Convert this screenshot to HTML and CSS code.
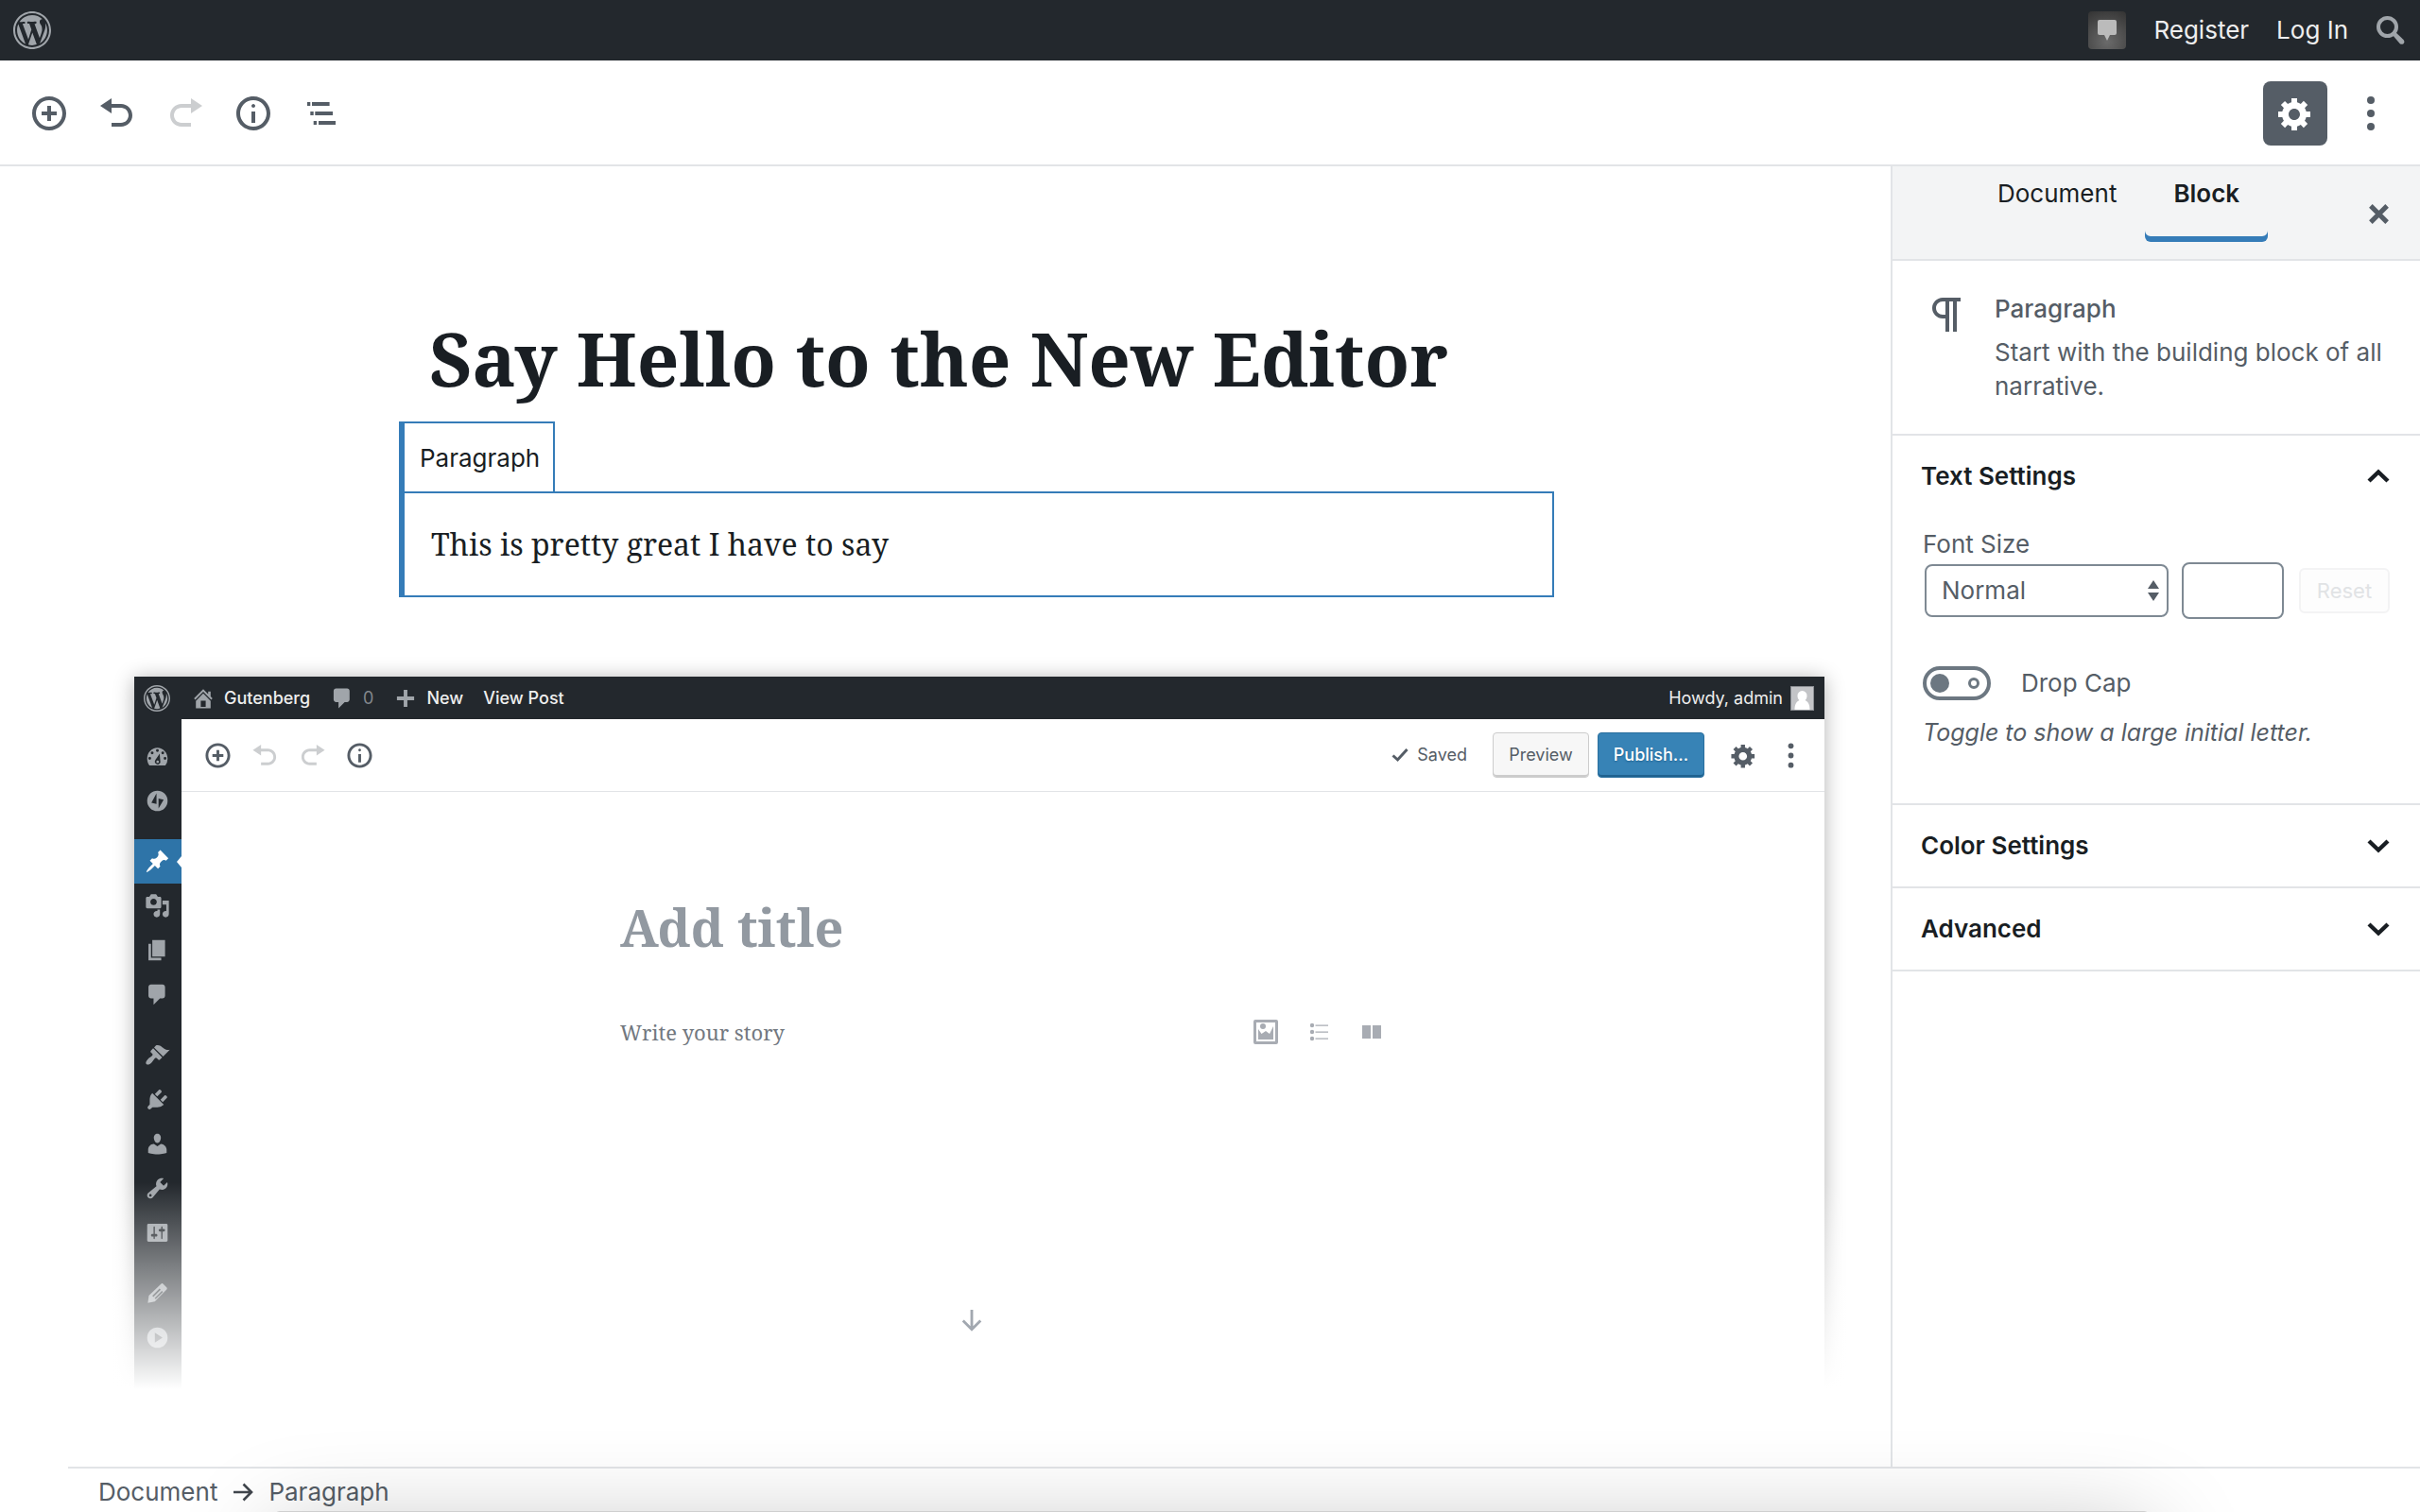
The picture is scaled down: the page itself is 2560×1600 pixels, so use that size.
FILE: index.html
```html
<!DOCTYPE html>
<html lang="en">
<head>
<meta charset="utf-8">
<meta name="viewport" content="width=device-width, initial-scale=1">
<title>Say Hello to the New Editor</title>
<link rel="stylesheet" href="styles.css">
</head>
<body>
<svg class="sprite" aria-hidden="true">
  <symbol id="i-wordpress" viewBox="0 0 20 20"><path d="M20 10c0-5.52-4.48-10-10-10S0 4.48 0 10s4.48 10 10 10 10-4.48 10-10zM10 1.01c4.97 0 8.99 4.02 8.99 8.99s-4.02 8.99-8.99 8.99S1.01 14.97 1.01 10 5.03 1.01 10 1.01zM8.01 14.82L4.96 6.61c.49-.03 1.05-.08 1.05-.08.43-.05.38-1.01-.06-.99 0 0-1.29.1-2.13.1-.15 0-.33 0-.52-.01 1.44-2.17 3.9-3.6 6.7-3.6 2.09 0 3.99.79 5.41 2.09-.6-.08-1.45.35-1.45 1.42 0 .66.38 1.22.79 1.88.31.54.5 1.22.5 2.21 0 1.34-1.27 4.48-1.27 4.48l-2.71-7.5c.48-.03.75-.16.75-.16.43-.05.38-1.1-.05-1.08 0 0-1.3.11-2.14.11-.78 0-2.11-.11-2.11-.11-.43-.02-.48 1.06-.05 1.08l.84.08 1.12 3.04zm6.02 2.15L16.64 10s.67-1.69.39-3.81c.63 1.14.94 2.42.94 3.81 0 2.96-1.56 5.58-3.94 6.97zM2.68 6.77L6.5 17.25c-2.67-1.3-4.47-4.08-4.47-7.25 0-1.16.2-2.23.65-3.23zm7.45 4.53l2.29 6.25c-.75.27-1.57.42-2.42.42-.72 0-1.41-.11-2.06-.3z"/></symbol>
  <symbol id="i-insert" viewBox="0 0 20 20"><path d="M10 1c-5 0-9 4-9 9s4 9 9 9 9-4 9-9-4-9-9-9zm0 16c-3.9 0-7-3.1-7-7s3.1-7 7-7 7 3.1 7 7-3.1 7-7 7zm1-11H9v3H6v2h3v3h2v-3h3V9h-3V6z"/></symbol>
  <symbol id="i-undo" viewBox="0 0 20 20"><path d="M12 5H7V2L1 6l6 4V7h5c2.2 0 4 1.8 4 4s-1.8 4-4 4H7v2h5c3.3 0 6-2.7 6-6s-2.7-6-6-6z"/></symbol>
  <symbol id="i-redo" viewBox="0 0 20 20"><path d="M8 5h5V2l6 4-6 4V7H8c-2.2 0-4 1.8-4 4s1.8 4 4 4h5v2H8c-3.3 0-6-2.7-6-6s2.7-6 6-6z"/></symbol>
  <symbol id="i-info" viewBox="0 0 20 20"><path d="M9 15h2V9H9v6zm1-10c-.5 0-1 .5-1 1s.5 1 1 1 1-.5 1-1-.5-1-1-1zm0-4c-5 0-9 4-9 9s4 9 9 9 9-4 9-9-4-9-9-9zm0 16c-3.9 0-7-3.1-7-7s3.1-7 7-7 7 3.1 7 7-3.1 7-7 7z"/></symbol>
  <symbol id="i-outline" viewBox="0 0 40 40"><path d="M5 8h3.300v4H5zM10 8h18.600v4H10zM8.300 18h3.400v4H8.300zM13.300 18H32v4H13.300zM11.700 28H15v4h-3.300zM17 28h18v4H17z"/></symbol>
  <symbol id="i-gear" viewBox="0 0 20 20"><path d="M18 12h-2.180c-.17.7-.44 1.350-.81 1.930l1.540 1.540-2.100 2.100-1.540-1.540c-.58.36-1.230.63-1.910.79V19H8v-2.180c-.68-.16-1.330-.43-1.910-.79l-1.540 1.540-2.120-2.120 1.540-1.540c-.36-.58-.63-1.230-.79-1.910H1V9.030h2.170c.16-.7.44-1.350.8-1.940L2.430 5.550l2.100-2.100 1.540 1.540c.58-.37 1.240-.64 1.930-.81V2h3v2.180c.68.16 1.330.43 1.910.79l1.540-1.540 2.120 2.120-1.540 1.540c.36.59.64 1.240.8 1.940H18V12zm-8.500 1.500c1.660 0 3-1.340 3-3s-1.340-3-3-3-3 1.340-3 3 1.340 3 3 3z"/></symbol>
  <symbol id="i-more" viewBox="0 0 20 20"><circle cx="10" cy="3" r="2"/><circle cx="10" cy="10" r="2"/><circle cx="10" cy="17" r="2"/></symbol>
  <symbol id="i-search" viewBox="0 0 32 32"><circle cx="12.500" cy="12.500" r="9.500" fill="none" stroke="currentColor" stroke-width="4"/><path d="M17.500 20.500l3-3 9 8.500c2.500 3-1 6.500-4 4z"/></symbol>
  <symbol id="i-bubble" viewBox="0 0 20 22"><path d="M2 0h16a2 2 0 0 1 2 2v12a2 2 0 0 1-2 2h-5l-3 6-3-6H2a2 2 0 0 1-2-2V2a2 2 0 0 1 2-2z"/></symbol>
  <symbol id="i-comment" viewBox="0 0 20 20"><path d="M5 2h9c1.100 0 2 .9 2 2v7c0 1.100-.9 2-2 2h-2l-5 5v-5H5c-1.100 0-2-.9-2-2V4c0-1.100.9-2 2-2z"/></symbol>
  <symbol id="i-home" viewBox="0 0 20 20"><path fill-rule="evenodd" d="M16 8.500l1.530 1.530-1.060 1.060L10 4.600l-6.470 6.490-1.060-1.060L10 2.500l4 4v-2h2v4zm-6-2.460l6 5.990V18H4v-5.970zM12 17v-5H8v5h4z"/></symbol>
  <symbol id="i-plus" viewBox="0 0 20 20"><path d="M17 8.500v3h-5.500V17h-3v-5.500H3v-3h5.500V3h3v5.500z"/></symbol>
  <symbol id="i-dashboard" viewBox="0 0 20 20"><path fill-rule="evenodd" d="M3.760 17h12.480A8.700 8.700 0 0 0 18 11.780c0-4.760-3.580-8.610-8-8.610s-8 3.850-8 8.610c0 1.960.65 3.770 1.760 5.220zM10 4.200a1.100 1.100 0 1 1 0 2.200 1.100 1.100 0 0 1 0-2.200zM5.900 6.200a1.100 1.100 0 1 1 0 2.200 1.100 1.100 0 0 1 0-2.200zM14.200 6.200a1.100 1.100 0 1 1 0 2.200 1.100 1.100 0 0 1 0-2.200zM4 10.400a1.100 1.100 0 1 1 0 2.200 1.100 1.100 0 0 1 0-2.200zM16 10.400a1.100 1.100 0 1 1 0 2.200 1.100 1.100 0 0 1 0-2.200zM11.800 7.800l.4 5.400a2.200 2.200 0 1 1-3.700-.6zM10.200 13.200a1 1 0 1 0 0 2 1 1 0 0 0 0-2z"/></symbol>
  <symbol id="i-bolt" viewBox="0 0 20 20"><path fill-rule="evenodd" d="M10 2a8 8 0 1 1 0 16 8 8 0 0 1 0-16zM9.300 4L5.300 11.500l4 .9zM10.900 8.200V16L14.900 9z"/></symbol>
  <symbol id="i-pin" viewBox="0 0 20 20"><path d="M10.440 3.020l1.820-1.820 6.360 6.350-1.830 1.820c-1.050-.68-2.480-.57-3.410.36l-.75.75c-.92.93-1.040 2.350-.35 3.410l-1.830 1.820-2.410-2.410-2.800 2.790c-.42.42-3.380 2.710-3.800 2.290s1.860-3.390 2.280-3.810l2.790-2.790L4.100 9.360l1.830-1.820c1.050.69 2.480.57 3.400-.36l.75-.75c.93-.92 1.050-2.350.36-3.410z"/></symbol>
  <symbol id="i-media" viewBox="0 0 20 20"><path fill-rule="evenodd" d="M13 11V4c0-.55-.45-1-1-1h-1.670L9 1H5L3.670 3H2c-.55 0-1 .45-1 1v7c0 .55.45 1 1 1h10c.55 0 1-.45 1-1zM7 4.500c1.380 0 2.500 1.120 2.500 2.500S8.380 9.500 7 9.500 4.500 8.380 4.500 7 5.620 4.500 7 4.500zM14 6h5v10.500c0 1.380-1.120 2.500-2.500 2.500S14 17.880 14 16.500s1.120-2.500 2.500-2.500c.17 0 .34.02.5.05V9h-3V6zm-4 8.050V13h2v3.500c0 1.380-1.120 2.500-2.500 2.500S7 17.880 7 16.500 8.120 14 9.500 14c.17 0 .34.02.5.05z"/></symbol>
  <symbol id="i-pages" viewBox="0 0 20 20"><path d="M6 15V2h10v13H6zm-1 1h8v2H3V5h2v11z"/></symbol>
  <symbol id="i-brush" viewBox="0 0 20 20"><path d="M14.480 11.060L7.410 3.990l1.500-1.500c.5-.56 2.300-.47 3.510.32 1.210.8 1.430 1.280 2.910 2.100 1.180.64 2.450 1.260 4.450.85zm-.71.71L6.700 4.700 4.930 6.470c-.39.39-.39 1.020 0 1.410l1.060 1.060c.39.39.39 1.030 0 1.420-.6.6-1.430 1.110-2.210 1.690-.35.26-.7.53-1.010.84C1.430 14.230.4 16.080 1.400 17.070c.99 1 2.840-.03 4.180-1.360.31-.31.58-.66.85-1.020.57-.78 1.080-1.610 1.690-2.210.39-.39 1.020-.39 1.410 0l1.060 1.060c.39.39 1.020.39 1.410 0z"/></symbol>
  <symbol id="i-plug" viewBox="0 0 20 20"><path d="M13.110 4.360L9.870 7.600 8 5.730l3.240-3.240c.35-.34 1.050-.2 1.560.32.52.51.66 1.210.31 1.550zm-8 1.770l.91-1.120 9.010 9.010-1.190.84c-.71.71-2.630 1.160-3.820 1.160H6.140L4.900 17.260c-.59.59-1.540.59-2.120 0-.59-.58-.59-1.530 0-2.120l1.240-1.240v-3.880c0-1.130.4-3.190 1.090-3.890zm7.260 3.970l3.240-3.240c.34-.35 1.040-.21 1.550.31.52.51.66 1.210.31 1.550l-3.240 3.250z"/></symbol>
  <symbol id="i-user" viewBox="0 0 20 20"><path d="M10 9.250c-2.270 0-2.730-3.440-2.730-3.440C7 4.020 7.820 2 9.970 2c2.160 0 2.980 2.020 2.710 3.810 0 0-.41 3.440-2.680 3.440zm0 2.570L12.720 10c2.390 0 4.520 2.330 4.520 4.530v2.490s-3.650 1.130-7.240 1.130c-3.650 0-7.240-1.130-7.240-1.130v-2.490c0-2.250 1.940-4.480 4.470-4.480z"/></symbol>
  <symbol id="i-wrench" viewBox="0 0 20 20"><path fill-rule="evenodd" d="M16.680 9.770c-1.340 1.340-3.300 1.670-4.950.99l-5.410 6.520c-.99.99-2.590.99-3.580 0s-.99-2.590 0-3.570l6.520-5.420c-.68-1.650-.35-3.610.99-4.950 1.280-1.280 3.120-1.620 4.720-1.060l-2.890 2.890 2.820 2.820 2.860-2.870c.53 1.580.18 3.390-1.080 4.650zM3.810 16.210c.4.39 1.040.39 1.430 0 .4-.4.4-1.040 0-1.430-.39-.4-1.030-.4-1.430 0-.39.39-.39 1.030 0 1.430z"/></symbol>
  <symbol id="i-sliders" viewBox="0 0 20 20"><path fill-rule="evenodd" d="M18 16V4c0-.55-.45-1-1-1H3c-.55 0-1 .45-1 1v12c0 .55.45 1 1 1h14c.55 0 1-.45 1-1zM8 11h1c.55 0 1 .45 1 1s-.45 1-1 1H8v1.500c0 .28-.22.5-.5.5s-.5-.22-.5-.5V13H6c-.55 0-1-.45-1-1s.45-1 1-1h1V5.500c0-.28.22-.5.5-.5s.5.22.5.5V11zm5-2h-1c-.55 0-1-.45-1-1s.45-1 1-1h1V5.500c0-.28.22-.5.5-.5s.5.22.5.5V7h1c.55 0 1 .45 1 1s-.45 1-1 1h-1v5.500c0 .28-.22.5-.5.5s-.5-.22-.5-.5V9z"/></symbol>
  <symbol id="i-pencil" viewBox="0 0 20 20"><path fill-rule="evenodd" d="M13 2.500q.8-.6 1.600.2l2.600 2.600q.8.800.1 1.700L8 16.500l-5.500 1 .8-5.700zM11.700 6.300L6 12l.9.900 5.700-5.700zM13.500 8.100l-5.700 5.700.9.900 5.700-5.700z"/></symbol>
  <symbol id="i-play" viewBox="0 0 20 20"><path fill-rule="evenodd" d="M10 2a8 8 0 1 1 0 16 8 8 0 0 1 0-16zM8 6.200v7.600l6-3.800z"/></symbol>
  <symbol id="i-paragraph" viewBox="0 0 24 24"><path fill-rule="evenodd" d="M11 5v7H9.500C7.600 12 6 10.400 6 8.500S7.600 5 9.500 5H11zM19 3H9.500C6.500 3 4 5.500 4 8.500S6.500 14 9.500 14H11v7h2V5h2v16h2V5h2z"/></symbol>
  <symbol id="i-close" viewBox="0 0 20 20"><path d="M2.500 2.500l15 15M17.500 2.500l-15 15" fill="none" stroke="currentColor" stroke-width="4.400"/></symbol>
  <symbol id="i-chevron" viewBox="0 0 24 16"><path d="M2 3l10 9.500L22 3" fill="none" stroke="currentColor" stroke-width="4.400"/></symbol>
  <symbol id="i-check" viewBox="0 0 18 16"><path d="M1.500 8.500l5 4.500L16.500 2" fill="none" stroke="currentColor" stroke-width="3"/></symbol>
  <symbol id="i-arrow" viewBox="0 0 22 22"><path d="M1 11h19M11.500 2.500l8.500 8.500-8.500 8.500" fill="none" stroke="currentColor" stroke-width="2.600"/></symbol>
  <symbol id="i-image" viewBox="0 0 26 26"><path fill-rule="evenodd" d="M2 0h22a2 2 0 0 1 2 2v22a2 2 0 0 1-2 2H2a2 2 0 0 1-2-2V2a2 2 0 0 1 2-2zM3 3v20h20V3z"/><circle cx="10" cy="7" r="3"/><path d="M5 10l3.500 5L13 12l4 3 4-8v14H5z"/></symbol>
  <symbol id="i-list" viewBox="-3 -3 26 26"><circle cx="3" cy="3" r="2.200"/><circle cx="3" cy="10" r="2.200"/><circle cx="3" cy="17" r="2.200"/><path d="M6.500 2.500H20v1.200H6.500zM6.500 9.500H20v1.200H6.500zM6.500 16.500H20v1.200H6.500z"/></symbol>
  <symbol id="i-columns" viewBox="-3 -3 26 26"><path d="M0 3h9v14H0zM11 3h9v14h-9z"/></symbol>
  <symbol id="i-updown" viewBox="0 0 12 22"><path d="M6 0l6 9H0zM6 22l6-9H0z"/></symbol>
</svg>

<nav class="adminbar" aria-label="Toolbar">
  <a class="adminbar-logo" href="#" aria-label="About WordPress"><svg class="icon"><use href="#i-wordpress"/></svg></a>
  <div class="adminbar-right">
    <a class="adminbar-avatar" href="#" aria-label="Comments"><svg><use href="#i-bubble"/></svg></a>
    <a href="#">Register</a>
    <a href="#">Log In</a>
    <a class="adminbar-search" href="#" aria-label="Search"><svg><use href="#i-search"/></svg></a>
  </div>
</nav>

<header class="toolbar">
  <div class="toolbar-group">
    <button type="button" aria-label="Add block"><svg class="icon"><use href="#i-insert"/></svg></button>
    <button type="button" aria-label="Undo"><svg class="icon"><use href="#i-undo"/></svg></button>
    <button type="button" aria-label="Redo" disabled><svg class="icon"><use href="#i-redo"/></svg></button>
    <button type="button" aria-label="Content structure"><svg class="icon"><use href="#i-info"/></svg></button>
    <button type="button" aria-label="Block navigation"><svg class="icon"><use href="#i-outline"/></svg></button>
  </div>
  <div class="toolbar-group toolbar-end">
    <button class="is-toggled" type="button" aria-label="Settings" aria-pressed="true"><svg class="icon"><use href="#i-gear"/></svg></button>
    <button type="button" aria-label="More tools and options"><svg class="icon"><use href="#i-more"/></svg></button>
  </div>
</header>

<div class="workspace">
  <main class="editor">
    <div class="column">
      <h1 class="post-title">Say Hello to the New Editor</h1>
      <section class="block">
        <span class="block-label">Paragraph</span>
        <p class="block-text">This is pretty great I have to say</p>
      </section>
    </div>

    <figure class="shot">
      <div class="shot-bar">
        <svg class="shot-wp"><use href="#i-wordpress"/></svg>
        <span class="shot-item"><svg><use href="#i-home"/></svg>Gutenberg</span>
        <span class="shot-item shot-count"><svg><use href="#i-comment"/></svg>0</span>
        <span class="shot-item"><svg><use href="#i-plus"/></svg>New</span>
        <span class="shot-item">View Post</span>
        <span class="shot-user">Howdy, admin
          <svg class="shot-avatar" viewBox="0 0 25 26"><rect width="25" height="26" fill="#8c8f94"/><rect x="1" y="1" width="23" height="24" fill="#c3c4c7"/><path d="M12.500 5a5 5 0 0 1 5 5.500c0 2-.9 3.500-2 4.500 3.500 1.500 5 5 5 10h-16c0-5 1.500-8.500 5-10-1.100-1-2-2.500-2-4.500A5 5 0 0 1 12.500 5z" fill="#fff"/></svg>
        </span>
      </div>
      <div class="shot-body">
        <ul class="shot-menu">
          <li><svg><use href="#i-dashboard"/></svg></li>
          <li><svg><use href="#i-bolt"/></svg></li>
          <li class="group current"><svg><use href="#i-pin"/></svg></li>
          <li><svg><use href="#i-media"/></svg></li>
          <li><svg><use href="#i-pages"/></svg></li>
          <li><svg><use href="#i-comment"/></svg></li>
          <li class="group"><svg><use href="#i-brush"/></svg></li>
          <li><svg><use href="#i-plug"/></svg></li>
          <li><svg><use href="#i-user"/></svg></li>
          <li><svg><use href="#i-wrench"/></svg></li>
          <li><svg><use href="#i-sliders"/></svg></li>
          <li class="group"><svg><use href="#i-pencil"/></svg></li>
          <li><svg><use href="#i-play"/></svg></li>
        </ul>
        <div class="shot-main">
          <div class="shot-toolbar">
            <button type="button" aria-label="Add block"><svg><use href="#i-insert"/></svg></button>
            <button type="button" aria-label="Undo" disabled><svg><use href="#i-undo"/></svg></button>
            <button type="button" aria-label="Redo" disabled><svg><use href="#i-redo"/></svg></button>
            <button type="button" aria-label="Content structure"><svg><use href="#i-info"/></svg></button>
            <span class="shot-saved"><svg><use href="#i-check"/></svg>Saved</span>
            <button class="push preview" type="button">Preview</button>
            <button class="push publish" type="button">Publish…</button>
            <button class="shot-gear" type="button" aria-label="Settings"><svg><use href="#i-gear"/></svg></button>
            <button type="button" aria-label="More"><svg><use href="#i-more"/></svg></button>
          </div>
          <div class="shot-canvas">
            <h2>Add title</h2>
            <div class="shot-story">
              <p>Write your story</p>
              <svg><use href="#i-image"/></svg>
              <svg><use href="#i-list"/></svg>
              <svg><use href="#i-columns"/></svg>
            </div>
            <svg class="shot-down"><use href="#i-arrow"/></svg>
          </div>
        </div>
      </div>
    </figure>
  </main>

  <aside class="sidebar">
    <div class="tabs">
      <button type="button">Document</button>
      <button class="active" type="button">Block</button>
      <button class="close" type="button" aria-label="Close settings"><svg><use href="#i-close"/></svg></button>
    </div>
    <section class="card">
      <svg><use href="#i-paragraph"/></svg>
      <div>
        <h2>Paragraph</h2>
        <p>Start with the building block of all narrative.</p>
      </div>
    </section>
    <section class="panel">
      <h2><button type="button" aria-expanded="true">Text Settings<svg class="up"><use href="#i-chevron"/></svg></button></h2>
      <div class="panel-body">
        <label class="field-label" for="font-size">Font Size</label>
        <div class="size-row">
          <div class="select">
            <select id="font-size"><option>Normal</option></select>
            <svg><use href="#i-updown"/></svg>
          </div>
          <input class="size-input" type="text" aria-label="Custom font size">
          <button class="reset" type="button" disabled>Reset</button>
        </div>
        <div class="toggle-row">
          <input class="toggle" id="drop-cap" type="checkbox" role="switch" aria-describedby="drop-cap-help">
          <label for="drop-cap">Drop Cap</label>
        </div>
        <p class="help" id="drop-cap-help">Toggle to show a large initial letter.</p>
      </div>
    </section>
    <section class="panel">
      <h2><button type="button" aria-expanded="false">Color Settings<svg><use href="#i-chevron"/></svg></button></h2>
    </section>
    <section class="panel">
      <h2><button type="button" aria-expanded="false">Advanced<svg><use href="#i-chevron"/></svg></button></h2>
    </section>
  </aside>
</div>

<footer class="breadcrumb">
  <button type="button">Document</button>
  <svg><use href="#i-arrow"/></svg>
  <button type="button">Paragraph</button>
</footer>
<div class="window-shadow"></div>
</body>
</html>
```

FILE: styles.css
```css
:root {
  --ink: #191e23;
  --slate: #555d66;
  --bar: #23282d;
  --line: #e2e4e7;
  --blue: #357cb8;
  --mute: #a0a5aa;
}

*, *::before, *::after { box-sizing: border-box; }

body {
  margin: 0;
  min-height: 100vh;
  display: flex;
  flex-direction: column;
  overflow: hidden;
  background: #fff;
  color: var(--slate);
  font: 26px/36px Inter, "Liberation Sans", sans-serif;
}

h1, h2, p, ul, figure { margin: 0; padding: 0; }
button, input, select { font: inherit; color: inherit; margin: 0; }
button { padding: 0; border: 0; background: none; }
svg { fill: currentColor; flex: none; display: block; }
.sprite { position: absolute; width: 0; height: 0; }
.icon { width: 40px; height: 40px; }

/* Admin bar */
.adminbar {
  height: 64px;
  padding: 0 15px 0 14px;
  display: flex;
  align-items: center;
  justify-content: space-between;
  background: var(--bar);
  color: #eee;
}
.adminbar a { color: inherit; text-decoration: none; }
.adminbar .adminbar-logo, .adminbar .adminbar-search { color: var(--mute); }
.adminbar-right { display: flex; align-items: center; gap: 29px; }
.adminbar-search svg { width: 32px; height: 32px; }
.adminbar-avatar {
  width: 40px;
  height: 40px;
  display: grid;
  place-items: center;
  border-radius: 4px;
  background: radial-gradient(circle at 50% 80%, #6b6b6b, #333);
}
.adminbar .adminbar-avatar { color: #bbb; }
.adminbar-avatar svg { width: 20px; height: 22px; }

/* Editor toolbar */
.toolbar {
  height: 112px;
  padding: 2px 16px 0;
  display: flex;
  align-items: center;
  justify-content: space-between;
  border-bottom: 2px solid var(--line);
}
.toolbar-group { display: flex; align-items: center; }
.toolbar-end { gap: 10px; }
.toolbar button {
  width: 72px;
  height: 72px;
  display: grid;
  place-items: center;
}
.toolbar button:disabled { color: #ccced0; }
.toolbar .is-toggled {
  width: 68px;
  height: 68px;
  border-radius: 8px;
  background: var(--slate);
  color: #fff;
}

/* Writing area */
.workspace { flex: 1; display: flex; }
.editor { flex: 1; min-width: 0; padding: 152px 0 80px 72px; }
.column { max-width: 1216px; margin: 0 auto; }
.post-title {
  padding-left: 26px;
  margin-bottom: 16px;
  color: var(--ink);
  font: bold 78px/102px "Noto Serif", "DejaVu Serif", serif;
}
.block {
  margin-left: -6px;
  border-left: 6px solid var(--blue);
  color: var(--ink);
}
.block-label {
  display: block;
  width: fit-content;
  height: 74px;
  padding: 0 14px 0 16px;
  border: solid var(--blue);
  border-width: 2px 2px 0 0;
  line-height: 74px;
}
.block-text {
  padding: 32px 28px;
  border: 2px solid var(--blue);
  border-left: 0;
  font: 32px/44px "Noto Serif", "DejaVu Serif", serif;
}

/* Editor preview picture */
.shot {
  position: relative;
  height: 754px;
  margin: 84px 70px 0;
  display: flex;
  flex-direction: column;
  background: #fff;
  box-shadow: 0 2px 20px rgba(0, 0, 0, .3);
  font-size: 18px;
  line-height: 24px;
}
.shot::after {
  content: "";
  position: absolute;
  inset: 535px -30px -30px;
  background: linear-gradient(rgba(255, 255, 255, 0), #fff 219px);
}
.shot-bar {
  height: 45px;
  padding: 0 11px 0 10px;
  display: flex;
  align-items: center;
  background: var(--bar);
  color: #eee;
  font-weight: 500;
}
.shot-bar svg { color: var(--mute); }
.shot-wp { width: 28px; height: 28px; margin-right: 22px; }
.shot-item { display: flex; align-items: center; gap: 9px; margin-right: 21px; }
.shot-item svg { width: 26px; height: 26px; }
.shot-count { color: #82878c; font-weight: 400; }
.shot-user { margin-left: auto; display: flex; align-items: center; gap: 8px; font-weight: 400; }
.shot-avatar { width: 25px; height: 26px; }
.shot-body { flex: 1; display: flex; }
.shot-menu {
  width: 50px;
  padding-top: 16px;
  background: var(--bar);
  color: var(--mute);
  list-style: none;
}
.shot-menu li { height: 47px; padding-right: 2px; display: grid; place-items: center; }
.shot-menu svg { width: 27px; height: 27px; }
.shot-menu .group { margin-top: 17px; }
.shot-menu .current {
  position: relative;
  background: #2e74a8;
  color: #fff;
}
.current::after {
  content: "";
  position: absolute;
  right: 0;
  border: solid transparent;
  border-width: 6px 5px 6px 0;
  border-right-color: #fff;
}
.shot-main { flex: 1; }
.shot-toolbar {
  height: 77px;
  padding: 0 11px 0 13px;
  display: flex;
  align-items: center;
  border-bottom: 1px solid var(--line);
}
.shot-toolbar button { width: 50px; height: 50px; display: grid; place-items: center; }
.shot-toolbar button:disabled { color: #ccced0; }
.shot-toolbar button svg { width: 29px; height: 29px; }
.shot-saved { margin-left: auto; display: flex; align-items: center; gap: 9px; }
.shot-saved svg { width: 18px; height: 16px; }
.shot-toolbar .push {
  width: 102px;
  height: 48px;
  border: 1px solid #ccc;
  border-radius: 4px;
  box-shadow: inset 0 -2px 0 #ccc;
  background: #f7f7f7;
}
.shot-toolbar .preview { margin: 0 9px 0 27px; }
.shot-toolbar .publish {
  width: 113px;
  border-color: #2a6f9e;
  box-shadow: inset 0 -2px 0 #1f628f;
  background: #3783b6;
  color: #fff;
  font-weight: 500;
  text-shadow: 0 1px 2px #1f628f;
}
.shot-toolbar .shot-gear { margin-left: 16px; }
.shot-canvas { max-width: 810px; margin: 0 auto; padding-top: 107px; }
.shot-canvas h2 {
  color: #9299a1;
  font: bold 54px/72px "Noto Serif", "DejaVu Serif", serif;
}
.shot-story {
  height: 40px;
  margin-top: 55px;
  padding-right: 2px;
  display: flex;
  align-items: center;
  gap: 30px;
  color: #a8acb3;
}
.shot-story p {
  margin-right: auto;
  color: #72787f;
  font: 22px/32px "Noto Serif", "DejaVu Serif", serif;
}
.shot-story svg { width: 26px; height: 26px; }
.shot-down {
  position: relative;
  z-index: 1;
  width: 24px;
  height: 24px;
  margin: 273px 0 0 360px;
  color: #a2a8b0;
  transform: rotate(90deg);
}

/* Settings sidebar */
.sidebar { width: 560px; border-left: 2px solid var(--line); }
.tabs {
  height: 100px;
  padding: 0 32px 0 81px;
  display: flex;
  border-bottom: 2px solid var(--line);
  background: #f3f4f5;
  color: var(--ink);
}
.tabs button { height: 80px; padding: 0 30px 22px; }
.tabs .active {
  border-radius: 6px;
  box-shadow: inset 0 -6px 0 var(--blue);
  font-weight: 600;
}
.tabs .close { height: 100px; margin-left: auto; padding: 0; color: var(--slate); }
.close svg { width: 23px; height: 23px; }
.card {
  padding: 33px 32px 32px 34px;
  display: flex;
  gap: 26px;
  border-bottom: 2px solid var(--line);
}
.card svg { width: 48px; height: 48px; }
.card h2 { margin-bottom: 10px; font-size: 26px; font-weight: 500; }
.panel { border-bottom: 2px solid var(--line); color: var(--ink); }
.panel h2 { font-size: 26px; font-weight: 600; }
.panel h2 button {
  width: 100%;
  height: 86px;
  padding: 0 32px 0 30px;
  display: flex;
  align-items: center;
  justify-content: space-between;
}
.panel h2 svg { width: 24px; height: 16px; }
.panel h2 .up { transform: rotate(180deg); }
.panel-body { padding: 11px 32px 57px; color: var(--slate); }
.field-label { display: block; margin-bottom: 1px; }
.size-row { display: flex; align-items: center; }
.select { position: relative; margin: 0 14px 0 2px; }
.select select {
  width: 258px;
  height: 56px;
  padding: 0 16px;
  appearance: none;
  border: 2px solid #7e8993;
  border-radius: 8px;
  background: #fff;
  display: block;
}
.select svg {
  position: absolute;
  top: 17px;
  right: 10px;
  width: 12px;
  height: 22px;
  pointer-events: none;
}
.size-input {
  width: 108px;
  height: 60px;
  margin-right: 16px;
  border: 2px solid #7e8993;
  border-radius: 8px;
  background: #fff;
}
.reset {
  width: 96px;
  height: 48px;
  border: 2px solid #f3f3f4;
  border-radius: 6px;
  background: #fdfdfd;
  color: #e1e3e5;
  font-size: 22px;
}
.toggle-row { margin-top: 50px; display: flex; align-items: center; gap: 32px; }
.toggle {
  position: relative;
  width: 72px;
  height: 36px;
  appearance: none;
  border: 4px solid #6c7781;
  border-radius: 18px;
}
.toggle::before, .toggle::after { content: ""; position: absolute; border-radius: 50%; }
.toggle::before { left: 4px; top: 4px; width: 20px; height: 20px; background: #6c7781; }
.toggle::after { right: 8px; top: 8px; width: 12px; height: 12px; border: 3px solid #6c7781; }
.help { margin-top: 16px; font-size: 25px; font-style: italic; }

/* Footer */
.breadcrumb {
  height: 48px;
  margin-left: 72px;
  padding: 4px 32px 0;
  display: flex;
  align-items: center;
  gap: 16px;
  border-top: 2px solid var(--line);
}
.breadcrumb svg { width: 22px; height: 22px; color: #40464d; }

.window-shadow {
  position: fixed;
  left: 290px;
  right: 286px;
  bottom: -199px;
  height: 200px;
  border-radius: 6px;
  background: #cfcfcf;
  box-shadow: 0 20px 100px rgba(0, 0, 0, .25);
  pointer-events: none;
}
```
